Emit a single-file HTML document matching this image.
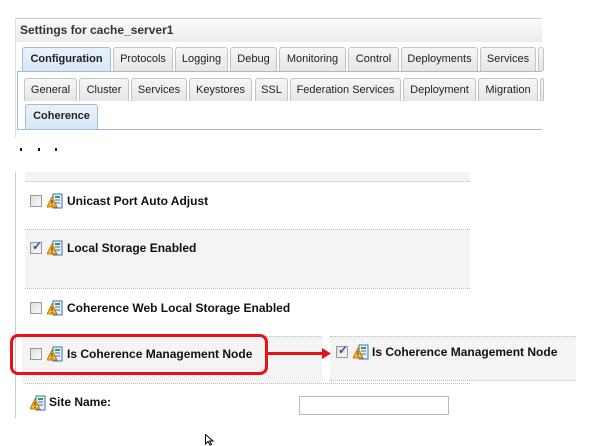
<!DOCTYPE html>
<html><head><style>
*{margin:0;padding:0;box-sizing:border-box}
body{width:608px;height:444px;background:#fff;position:relative;overflow:hidden;font-family:"Liberation Sans",Tahoma,sans-serif;font-size:11px;color:#1a1a3a}
.a{position:absolute}
.tab{position:absolute;height:24px;border:1px solid #c4c4c4;border-bottom:none;border-radius:3px 3px 0 0;background:linear-gradient(#f6f6f6,#e6e6e6);text-align:center;line-height:22px;font-size:11px;color:#222}
.sel{background:linear-gradient(#eaf2fb,#d8e6f5);border-color:#9fbcd9;font-weight:bold;color:#222}
.cb{position:absolute;width:12px;height:12px;border:1px solid #999;background:linear-gradient(135deg,#ddd,#fafafa)}
.lbl{position:absolute;font-weight:bold;font-size:12px;color:#111}
.dot{position:absolute;height:0;border-top:1px dotted #bbb}
</style></head><body>
<div class="a" style="left:15px;top:18px;width:527px;height:1px;background:#ccc"></div>
<div class="a" style="left:15px;top:18px;width:1px;height:120px;background:#ddd"></div>
<div class="a" style="left:16px;top:19px;width:526px;height:23px;background:linear-gradient(#fbfbfb,#ececec)"></div>
<div class="a" style="left:20px;top:23px;font-weight:bold;font-size:12px;color:#333">Settings for cache_server1</div>
<div class="tab sel" style="left:22px;top:47px;width:89px">Configuration</div>
<div class="tab" style="left:113px;top:47px;width:60px">Protocols</div>
<div class="tab" style="left:175px;top:47px;width:53px">Logging</div>
<div class="tab" style="left:230px;top:47px;width:47px">Debug</div>
<div class="tab" style="left:279px;top:47px;width:67px">Monitoring</div>
<div class="tab" style="left:348px;top:47px;width:51px">Control</div>
<div class="tab" style="left:401px;top:47px;width:77px">Deployments</div>
<div class="tab" style="left:480px;top:47px;width:56px">Services</div>
<div class="tab" style="left:538px;top:47px;width:6px"></div>
<div class="a" style="left:17px;top:71px;width:525px;height:1px;background:#9fbcd9"></div>
<div class="a" style="left:17px;top:71px;width:1px;height:59px;background:#9fbcd9"></div>
<div class="tab" style="left:24px;top:78px;width:53px;height:23px">General</div>
<div class="tab" style="left:79px;top:78px;width:50px;height:23px">Cluster</div>
<div class="tab" style="left:131px;top:78px;width:56px;height:23px">Services</div>
<div class="tab" style="left:189px;top:78px;width:63px;height:23px">Keystores</div>
<div class="tab" style="left:255px;top:78px;width:33px;height:23px">SSL</div>
<div class="tab" style="left:290px;top:78px;width:111px;height:23px">Federation Services</div>
<div class="tab" style="left:403px;top:78px;width:73px;height:23px">Deployment</div>
<div class="tab" style="left:478px;top:78px;width:60px;height:23px">Migration</div>
<div class="tab" style="left:540px;top:78px;width:4px;height:23px"></div>
<div class="tab sel" style="left:25px;top:104px;width:73px;height:25px">Coherence</div>
<div class="a" style="left:17px;top:129px;width:525px;height:1px;background:#9fbcd9"></div>
<div class="a" style="left:20px;top:148px;width:2px;height:3px;background:#111"></div>
<div class="a" style="left:38px;top:148px;width:2px;height:3px;background:#111"></div>
<div class="a" style="left:55px;top:148px;width:2px;height:3px;background:#111"></div>

<div class="a" style="left:15px;top:172px;width:1px;height:246px;background:#ccc"></div>
<div class="a" style="left:25px;top:172px;width:445px;height:9px;background:#f4f4f4"></div>
<div class="dot" style="left:25px;top:181px;width:445px"></div>
<div class="dot" style="left:25px;top:229px;width:445px"></div>
<div class="a" style="left:25px;top:230px;width:445px;height:58px;background:#f4f4f4"></div>
<div class="dot" style="left:25px;top:288px;width:445px"></div>
<div class="a" style="left:22px;top:336px;width:300px;height:47px;background:#f4f4f4"></div>
<div class="dot" style="left:22px;top:336px;width:300px"></div>
<div class="dot" style="left:25px;top:383px;width:445px"></div>
<div class="a" style="left:330px;top:336px;width:246px;height:44px;background:#f4f4f4"></div>
<div class="dot" style="left:330px;top:336px;width:246px"></div>
<div class="dot" style="left:330px;top:380px;width:246px"></div>

<svg width="0" height="0" style="position:absolute"><defs>
<g id="ic"><rect x="6" y="1" width="9" height="14" fill="#e8f0fb" stroke="#3b6fb6"/><rect x="8" y="3" width="5" height="2" fill="#3a9a3a"/><line x1="8" y1="7" x2="13" y2="7" stroke="#3b6fb6"/><line x1="8" y1="10" x2="13" y2="10" stroke="#3b6fb6"/><path d="M5 4 L10 14 L0 14 Z" fill="#f5b82e" stroke="#c07a10"/><rect x="4.5" y="7" width="1" height="4" fill="#333"/><rect x="4.5" y="12" width="1" height="1" fill="#333"/></g>
</defs></svg>

<div class="cb" style="left:30px;top:195px"></div>
<svg class="a" style="left:47px;top:193px" width="16" height="16"><use href="#ic"/></svg>
<div class="lbl" style="left:67px;top:194px">Unicast Port Auto Adjust</div>

<div class="cb" style="left:30px;top:242px"></div><div class="a" style="left:32px;top:239px;color:#3a4f9a;font-size:12px;font-weight:bold">✓</div>
<svg class="a" style="left:47px;top:240px" width="16" height="16"><use href="#ic"/></svg>
<div class="lbl" style="left:67px;top:241px">Local Storage Enabled</div>

<div class="cb" style="left:30px;top:302px"></div>
<svg class="a" style="left:47px;top:300px" width="16" height="16"><use href="#ic"/></svg>
<div class="lbl" style="left:67px;top:301px">Coherence Web Local Storage Enabled</div>

<div class="cb" style="left:30px;top:348px"></div>
<svg class="a" style="left:47px;top:346px" width="16" height="16"><use href="#ic"/></svg>
<div class="lbl" style="left:67px;top:347px">Is Coherence Management Node</div>
<div class="a" style="left:10px;top:334px;width:258px;height:41px;border:3px solid #e8101a;border-radius:8px"></div>
<div class="a" style="left:268px;top:352px;width:56px;height:3px;background:#e8101a"></div>
<svg class="a" style="left:322px;top:348px" width="10" height="11"><path d="M0 0 L9 5.5 L0 11 Z" fill="#e8101a"/></svg>

<div class="cb" style="left:336px;top:346px"></div><div class="a" style="left:338px;top:343px;color:#3a4f9a;font-size:12px;font-weight:bold">✓</div>
<svg class="a" style="left:353px;top:344px" width="16" height="16"><use href="#ic"/></svg>
<div class="lbl" style="left:372px;top:345px">Is Coherence Management Node</div>

<svg class="a" style="left:30px;top:395px" width="16" height="16"><use href="#ic"/></svg>
<div class="lbl" style="left:49px;top:395px">Site Name:</div>
<div class="a" style="left:299px;top:396px;width:150px;height:19px;border:1px solid #bbb;background:#fff"></div>

<svg class="a" style="left:205px;top:434px" width="10" height="12"><path d="M0.5 0.5 L0.5 10 L3 7.5 L5 11 L6.5 10.3 L4.6 7 L8 7 Z" fill="#fff" stroke="#000"/></svg>
</body></html>
